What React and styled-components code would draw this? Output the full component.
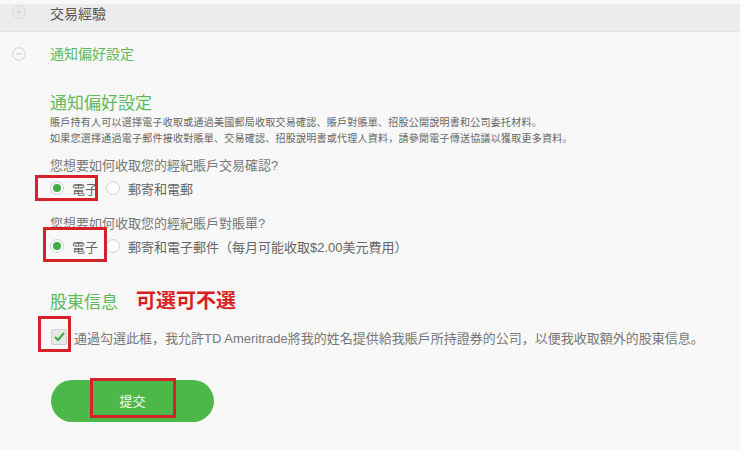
import React from 'react'
import styled, { createGlobalStyle } from 'styled-components'

const GlobalStyle = createGlobalStyle`
 html, body {
  margin: 0;
  padding: 0;
  background: #f8f8f8;
  font-family: "Liberation Sans", "Noto Sans CJK JP", "Noto Sans CJK TC", sans-serif;
 }
`

const Page = styled.div`
 width: 740px;
 height: 450px;
 overflow: hidden;
 background: #f8f8f8;
 padding-top: 4px;
 box-sizing: border-box;
`

const PanelHeader = styled.div`
 display: flex;
 align-items: ${({ open }) => (open ? 'center' : 'flex-start')};
 height: ${({ open }) => (open ? 44 : 28)}px;
 background: ${({ open }) => (open ? '#f8f8f8' : '#ececec')};
 border-bottom: ${({ open }) => (open ? 'none' : '1px solid #e1e1e1')};
 box-sizing: border-box;
 padding-top: ${({ open }) => (open ? 0 : 1)}px;
`

const IconCell = styled.div`
 width: 50px;
 display: flex;
 justify-content: center;
 padding-right: 12px;
 box-sizing: border-box;
`

const PanelTitle = styled.div`
 font-size: 14px;
 line-height: 18px;
 color: ${({ open }) => (open ? '#5cb85c' : '#555')};
`

const Content = styled.div`
 padding-left: 50px;
 padding-top: 17px;
`

const Heading = styled.h2`
 margin: 0;
 font-weight: normal;
 font-size: 17px;
 line-height: 22px;
 color: #5fb95c;
 display: flex;
 align-items: baseline;
 gap: 18px;
`

const Note = styled.span`
 color: #d81f26;
 font-weight: bold;
 font-size: 20px;
`

const Para = styled.p`
 margin: 0;
 font-size: 10px;
 line-height: 16px;
 letter-spacing: 0.25px;
 color: #666;
`

const Question = styled.div`
 margin-top: ${({ top }) => top}px;
 font-size: 13px;
 line-height: 18px;
 color: #777;
`

const RadioRow = styled.div`
 position: relative;
 margin-top: 3px;
 height: 20px;
 display: flex;
 align-items: center;
 gap: 8px;
 font-size: 13px;
 color: #666;
`

const Radio = styled.span`
 width: 14px;
 height: 14px;
 border-radius: 50%;
 background: #fff;
 border: 1px solid #d4d4d4;
 box-sizing: border-box;
 display: flex;
 align-items: center;
 justify-content: center;
 box-shadow: inset 0 1px 1px rgba(0, 0, 0, 0.06);

 &::after {
  content: '';
  width: 8px;
  height: 8px;
  border-radius: 50%;
  background: ${({ checked }) => (checked ? '#3fb044' : 'transparent')};
 }
`

const Frame = styled.span`
 position: absolute;
 left: ${({ x }) => x}px;
 top: ${({ y }) => y}px;
 width: ${({ w }) => w}px;
 height: ${({ h }) => h}px;
 border: 3px solid #d7212a;
 box-sizing: border-box;
 pointer-events: none;
`

const Section = styled.div`
 margin-top: ${({ top }) => top}px;
`

const CheckRow = styled.div`
 position: relative;
 margin-top: 13px;
 height: 20px;
 display: flex;
 align-items: center;
 gap: 7px;
 padding-left: 1px;
 font-size: 13px;
 color: #777;
`

const CheckBox = styled.span`
 width: 16px;
 height: 16px;
 background: #e7e7e7;
 border: 1px solid #d0d0d0;
 border-radius: 2px;
 box-sizing: border-box;
 display: flex;
 align-items: center;
 justify-content: center;
`

const ButtonWrap = styled.div`
 position: relative;
 margin-top: 33px;
 margin-left: 1px;
 width: 163px;
`

const SubmitButton = styled.button`
 width: 163px;
 height: 42px;
 border: none;
 border-radius: 21px;
 background: #4cb849;
 color: #f2fbf0;
 font-family: "Noto Sans CJK JP", sans-serif;
 font-size: 13px;
 padding: 0 0 2px;
`

const CircleIcon = ({ plus }) => (
  <svg width="14" height="14" viewBox="0 0 14 14">
    <circle cx="7" cy="7" r="6.3" fill="none" stroke={plus ? '#d6d6d6' : '#cfcfcf'} strokeWidth="1" />
    <line x1="3.8" y1="7" x2="10.2" y2="7" stroke={plus ? '#d6d6d6' : '#c8c8c8'} strokeWidth="1" />
    {plus && <line x1="7" y1="3.8" x2="7" y2="10.2" stroke="#d6d6d6" strokeWidth="1" />}
  </svg>
)

const App = () => {
  return (
    <Page>
      <GlobalStyle />
      <PanelHeader>
        <IconCell><CircleIcon plus /></IconCell>
        <PanelTitle>交易經驗</PanelTitle>
      </PanelHeader>
      <PanelHeader open>
        <IconCell><CircleIcon /></IconCell>
        <PanelTitle open>通知偏好設定</PanelTitle>
      </PanelHeader>

      <Content>
        <Heading>通知偏好設定</Heading>
        <Para>賬戶持有人可以選擇電子收取或通過美國郵局收取交易確認、賬戶對賬單、招股公開說明書和公司委托材料。</Para>
        <Para>如果您選擇通過電子郵件接收對賬單、交易確認、招股說明書或代理人資料，請參閱電子傳送協議以獲取更多資料。</Para>

        <Question top={10}>您想要如何收取您的經紀賬戶交易確認?</Question>
        <RadioRow>
          <Radio checked />
          <span>電子</span>
          <Radio />
          <span>郵寄和電郵</span>
          <Frame x={-15} y={-3} w={63} h={26} />
        </RadioRow>

        <Question top={17}>您想要如何收取您的經紀賬戶對賬單?</Question>
        <RadioRow>
          <Radio checked />
          <span>電子</span>
          <Radio />
          <span>郵寄和電子郵件（每月可能收取$2.00美元費用）</span>
          <Frame x={-7} y={-9} w={64} h={35} />
        </RadioRow>

        <Section top={34}>
          <Heading>股東信息<Note>可選可不選</Note></Heading>
        </Section>
        <CheckRow>
          <CheckBox>
            <svg width="11" height="10" viewBox="0 0 11 10">
              <polyline points="1.5,5.5 4,8 9.5,1.5" fill="none" stroke="#3aa93f" strokeWidth="2" strokeLinecap="round" strokeLinejoin="round" />
            </svg>
          </CheckBox>
          <span>通過勾選此框，我允許TD Ameritrade將我的姓名提供給我賬戶所持證券的公司，以便我收取額外的股東信息。</span>
          <Frame x={-12} y={-11} w={33} h={36} />
        </CheckRow>

        <ButtonWrap>
          <SubmitButton>提交</SubmitButton>
          <Frame x={39} y={-2} w={86} h={40} />
        </ButtonWrap>
      </Content>
    </Page>
  )
}

export default App
